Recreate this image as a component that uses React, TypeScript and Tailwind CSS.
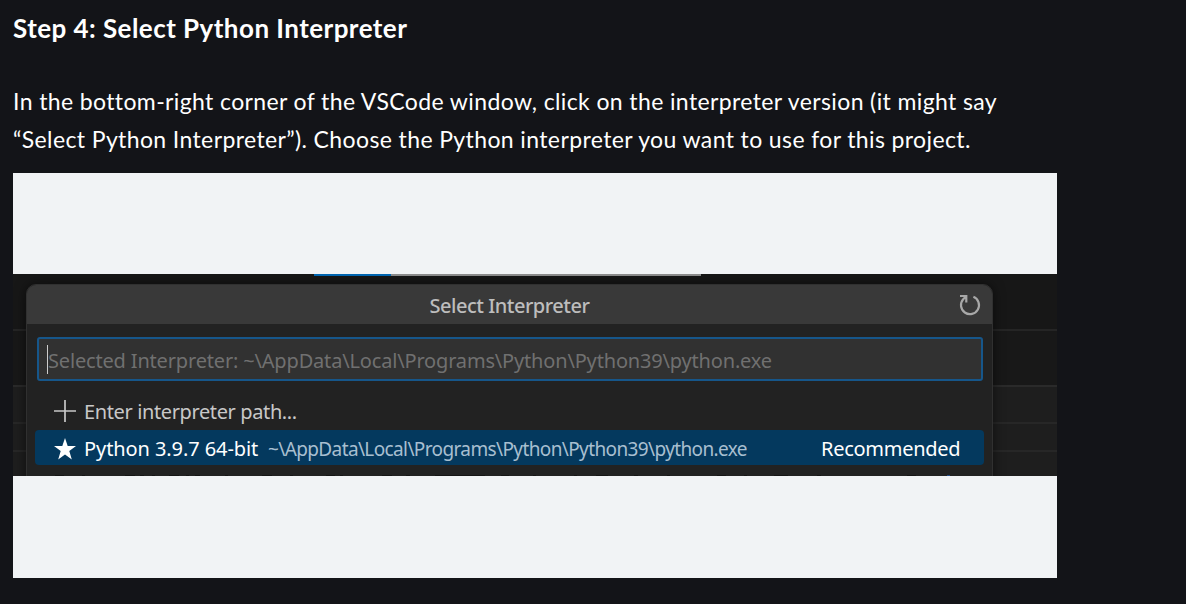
export default function App() {
  return (
    <main className="flex h-[604px] w-[1186px] flex-col overflow-hidden bg-[#131418] pl-[13px] font-['Lato',sans-serif] text-white">
      <h2 className="mt-[11px] h-[34px] text-[26px] leading-[34px] font-bold tracking-[0.45px] whitespace-nowrap">
        <span>Step 4: Select Python Interpreter</span>
      </h2>
      <p className="mt-[37px] h-[76px] text-[23px] leading-[38px] tracking-[0.38px] whitespace-nowrap">
        <span>In the bottom-right corner of the VSCode window, click on the interpreter version (it might say</span>
        <br />
        <span>“Select Python Interpreter”). Choose the Python interpreter you want to use for this project.</span>
      </p>
      <figure className="mt-[15px] flex h-[405px] w-[1044px] flex-col bg-[#f1f3f5] pt-[101px] pb-[102px]">
        <div className="relative flex h-[202px] flex-col overflow-hidden bg-[#1e1e1e] font-['Noto_Sans',sans-serif]">
          <div className="h-[57px] shrink-0 border-b-2 border-[#252525] bg-[#171717] pl-[301px]">
            <div className="flex h-[2px]">
              <div className="h-[2px] w-[77px] bg-[#0068b5]" />
              <div className="h-[2px] w-[310px] bg-[#8f8f8f]" />
            </div>
          </div>
          <div className="h-[56px] shrink-0 border-b-2 border-[#2a2a2a] bg-[#181818]" />
          <div className="h-[37px] shrink-0 border-b-2 border-[#272727]" />
          <div className="h-[28px] shrink-0 border-b-2 border-[#272727]" />
          <section className="absolute top-[10px] left-[13px] flex h-[220px] w-[967px] flex-col overflow-hidden rounded-[10px] border border-[#303030] bg-[#222222] shadow-[0_0_12px_rgba(0,0,0,0.55)]">
            <header className="relative flex h-[39px] shrink-0 items-center justify-center bg-[#393939] pt-[2px] text-[20px] font-medium tracking-[-0.5px] text-[#bdbdbd]">
              <span className="whitespace-nowrap">Select Interpreter</span>
              <svg className="absolute top-[8px] right-[10px] h-[24px] w-[24px]" viewBox="0 0 24 24" fill="none" stroke="#a8a8a8" strokeWidth="2.2">
                <path d="M15.4 3.8A9 9 0 1 1 5.2 6.2L8.2 3.4M2 3h6.3v6.4" />
              </svg>
            </header>
            <div className="mt-[13px] ml-[10px] flex h-[44px] w-[946px] shrink-0 items-center rounded-[3px] border-2 border-[#16568a] bg-[#313131] pl-[8px] text-[20px] tracking-[-0.17px] text-[#707070]">
              <div className="h-[29px] w-px bg-[#cccccc]" />
              <span className="pt-[3px] whitespace-nowrap">Selected Interpreter: ~\AppData\Local\Programs\Python\Python39\python.exe</span>
            </div>
            <div className="mt-[13px] flex h-[36px] shrink-0 items-center pl-[27px] text-[20px] tracking-[-0.38px] text-[#c8c8c8]">
              <svg className="-mt-[2px] h-[22px] w-[22px]" viewBox="0 0 22 22" stroke="#c8c8c8" strokeWidth="1.7">
                <path d="M11 0v22M0 11h22" />
              </svg>
              <span className="ml-[8px] whitespace-nowrap">Enter interpreter path...</span>
            </div>
            <div className="ml-[8px] flex h-[35px] w-[949px] shrink-0 items-center rounded-[4px] bg-[#04395e] pl-[19px] text-[20px] text-white">
              <svg className="mt-[2px] h-[22px] w-[22px]" viewBox="0 0 22 22" fill="white">
                <path d="M11 0l2.7 8H22l-6.7 5 2.5 8.5L11 16.4l-6.8 5.1L6.7 13 0 8h8.3z" />
              </svg>
              <span className="ml-[8px] w-[184px] pt-[3px] tracking-[-0.08px] whitespace-nowrap">Python 3.9.7 64-bit</span>
              <span className="w-[553px] pt-[3px] text-[19px] tracking-[-0.62px] whitespace-nowrap text-[#a8bfd0]">~\AppData\Local\Programs\Python\Python39\python.exe</span>
              <span className="pt-[3px] tracking-[-0.28px] whitespace-nowrap">Recommended</span>
            </div>
            <svg className="mt-[9px] ml-[27px] h-[3px] w-[910px] shrink-0" viewBox="0 0 910 3" fill="none" stroke="#151515" strokeWidth="2">
              <path d="M1 2h9M28 2h3M71 2h10M86 2h4M98 2h3M115 2h10M132 2h3M141 2h5M171 2h3M208 2h10M236 2h3M272 2h9M286 2h3M328 2h10M352 2h4M381 2h50M447 2h8M479 2h3M520 2h3M542 2h12M580 2h4M613 2h3M663 2h9M690 2h3M720 2h14M763 2h4M853 2h9" />
              <path d="M893 2h3" stroke="#244b85" />
            </svg>
          </section>
        </div>
      </figure>
    </main>
  );
}
